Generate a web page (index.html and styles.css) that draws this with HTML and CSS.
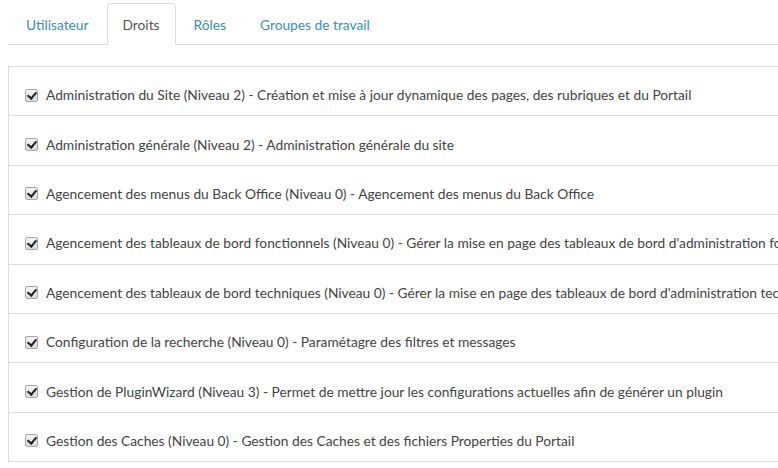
FILE: index.html
```html
<!DOCTYPE html>
<html lang="fr">
<head>
<meta charset="utf-8">
<title>Droits</title>
<link rel="stylesheet" href="styles.css">
</head>
<body>
<ul class="tabs">
  <li class="tab"><a href="#">Utilisateur</a></li>
  <li class="tab active"><a href="#">Droits</a></li>
  <li class="tab"><a href="#">Rôles</a></li>
  <li class="tab"><a href="#">Groupes de travail</a></li>
</ul>
<div class="panel">
  <label class="row"><input type="checkbox" checked><span>Administration du Site (Niveau 2) - Création et mise à jour dynamique des pages, des rubriques et du Portail</span></label>
  <label class="row"><input type="checkbox" checked><span>Administration générale (Niveau 2) - Administration générale du site</span></label>
  <label class="row"><input type="checkbox" checked><span>Agencement des menus du Back Office (Niveau 0) - Agencement des menus du Back Office</span></label>
  <label class="row"><input type="checkbox" checked><span>Agencement des tableaux de bord fonctionnels (Niveau 0) - Gérer la mise en page des tableaux de bord d'administration fonctionnels</span></label>
  <label class="row"><input type="checkbox" checked><span>Agencement des tableaux de bord techniques (Niveau 0) - Gérer la mise en page des tableaux de bord d'administration techniques</span></label>
  <label class="row"><input type="checkbox" checked><span>Configuration de la recherche (Niveau 0) - Paramétagre des filtres et messages</span></label>
  <label class="row"><input type="checkbox" checked><span>Gestion de PluginWizard (Niveau 3) - Permet de mettre jour les configurations actuelles afin de générer un plugin</span></label>
  <label class="row"><input type="checkbox" checked><span>Gestion des Caches (Niveau 0) - Gestion des Caches et des fichiers Properties du Portail</span></label>
</div>
</body>
</html>
```
FILE: styles.css
```css
html, body {
  margin: 0;
  padding: 0;
  overflow: hidden;
  background: #fff;
}
body {
  padding: 3px 0 0 8px;
  font-family: "Lato", "Liberation Sans", sans-serif;
  font-size: 13.75px;
  color: #444;
  width: 1100px;
}
.tabs {
  list-style: none;
  margin: 0;
  padding: 0 0 0 2px;
  display: flex;
  border-bottom: 1px solid #ddd;
}
.tab {
  margin-right: 2px;
  margin-bottom: -1px;
}
.tab a {
  display: block;
  padding: 1px 15px 0;
  height: 39px;
  line-height: 40px;
  border: 1px solid transparent;
  border-radius: 4px 4px 0 0;
  color: #3c8dbc;
  text-decoration: none;
}
.tab.active a {
  color: #555;
  border-color: #ddd;
  border-bottom-color: #fff;
  background: #fff;
}
.panel {
  margin-top: 21px;
  border-top: 1px solid #ddd;
  border-left: 1px solid #ddd;
  width: 1000px;
}
.row {
  display: flex;
  align-items: center;
  box-sizing: border-box;
  height: 49.4px;
  padding: 19px 0 11px 16px;
  line-height: 18px;
  border-bottom: 1px solid #ddd;
  white-space: nowrap;
}
.row input {
  -webkit-appearance: none;
  appearance: none;
  width: 13px;
  height: 13px;
  margin: 0 8px 0 0;
  border: 1px solid #a6a6a6;
  border-radius: 2px;
  background: linear-gradient(#f4f4f4, #dcdcdc);
  position: relative;
  flex: none;
}
.row input:checked::after {
  content: "";
  position: absolute;
  left: 3px;
  top: 0px;
  width: 4px;
  height: 7px;
  border: solid #222;
  border-width: 0 2px 2px 0;
  transform: rotate(40deg);
}
```
